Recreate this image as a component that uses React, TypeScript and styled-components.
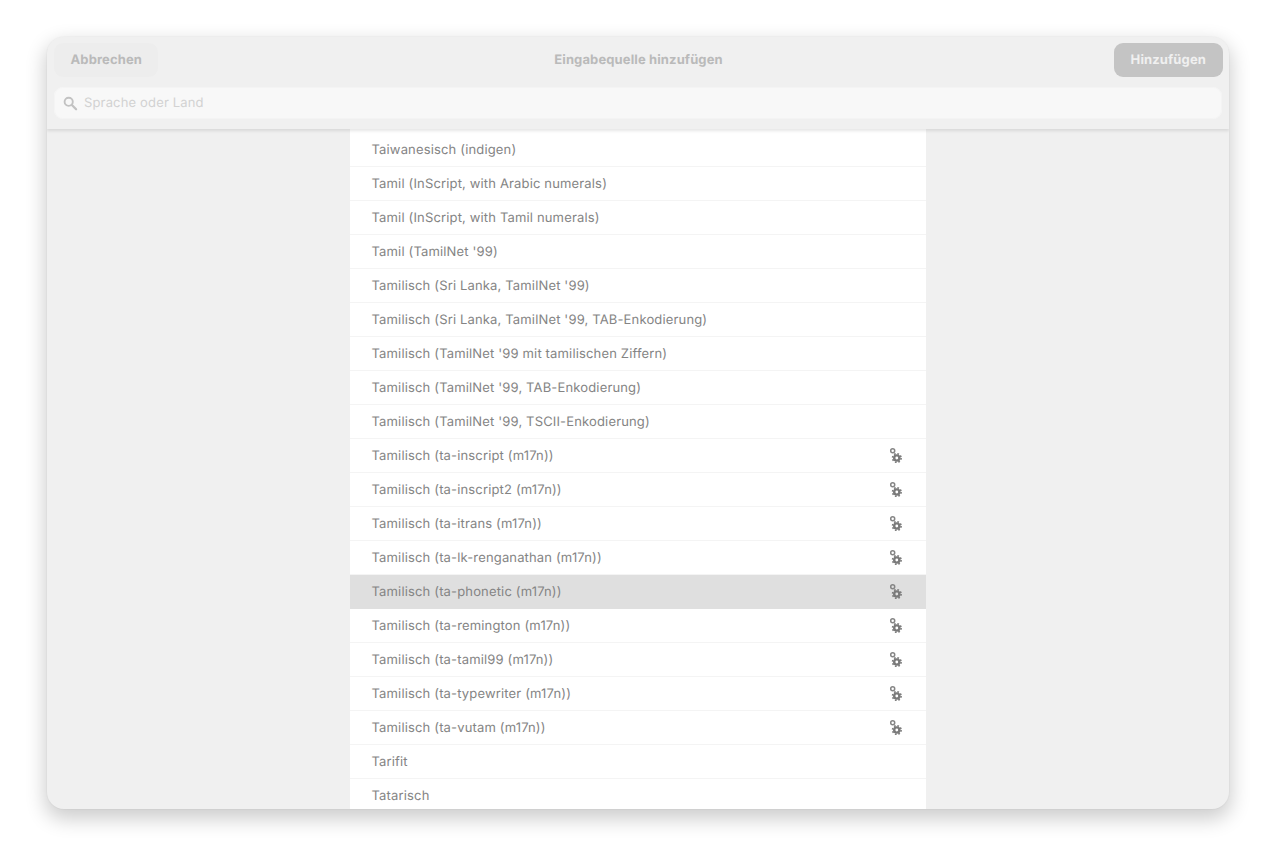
import styled, { createGlobalStyle } from "styled-components";

const GlobalStyle = createGlobalStyle`
  html, body {
    margin: 0;
    padding: 0;
    background: #fff;
  }
  body {
    font-family: "Inter", "Liberation Sans", sans-serif;
    font-size: 13px;
    letter-spacing: 0.155px;
    text-rendering: geometricPrecision;
    overflow: hidden;
  }
`;

const Page = styled.div`
  height: 866px;
  box-sizing: border-box;
  padding: 37px 47px 57px;
`;

const Window = styled.div`
  height: 772px;
  display: flex;
  flex-direction: column;
  background: #f0f0f0;
  border-radius: 17px;
  overflow: hidden;
  box-shadow: 0 0 0 1px rgba(0, 0, 0, 0.02), 0 8px 20px 2px rgba(0, 0, 0, 0.2);
`;

const Header = styled.header`
  flex: none;
  height: 92px;
  box-sizing: border-box;
  padding: 6px 6px 0 7px;
  background: #f0f0f0;
  box-shadow: 0 2px 3px rgba(0, 0, 0, 0.1);
  position: relative;
  z-index: 1;
`;

const TitleBar = styled.div`
  display: grid;
  grid-template-columns: 1fr auto 1fr;
  align-items: center;
  height: 34px;
`;

const Title = styled.div`
  font-weight: 700;
  letter-spacing: 0.12px;
  color: #bababa;
`;

const Button = styled.button<{ $primary?: boolean }>`
  height: 34px;
  padding: 0 ${(props) => (props.$primary ? "17px" : "16.5px")};
  justify-self: ${(props) => (props.$primary ? "end" : "start")};
  border: none;
  border-radius: 9px;
  font: 700 13px "Inter", "Liberation Sans", sans-serif;
  letter-spacing: 0.12px;
  text-rendering: geometricPrecision;
  background: ${(props) => (props.$primary ? "#c4c4c4" : "#ededed")};
  color: ${(props) => (props.$primary ? "#f0f0f0" : "#bababa")};
`;

const SearchBox = styled.div`
  display: flex;
  align-items: center;
  gap: 6px;
  height: 32px;
  box-sizing: border-box;
  margin: 10px 0 0;
  padding: 0 9px;
  width: 1168px;
  background: #f8f8f8;
  border-radius: 9px;
  box-shadow: inset 0 0 0 1px #f4f4f4;
  color: #d2d2d2;
  svg {
    flex: none;
  }
`;

const Body = styled.div`
  flex: 1;
  min-height: 0;
  display: flex;
  justify-content: center;
  overflow: hidden;
`;

const List = styled.ul`
  list-style: none;
  margin: 0 0 0 -1px;
  padding: 4px 0 0;
  width: 576px;
  background: #fff;
`;

const Row = styled.li<{ $selected?: boolean }>`
  height: 34px;
  box-sizing: border-box;
  display: flex;
  align-items: center;
  justify-content: space-between;
  padding: 0 22px;
  color: #848484;
  background: ${(props) => (props.$selected ? "#dfdfdf" : "#fff")};
  border-bottom: 1px solid ${(props) => (props.$selected ? "#dfdfdf" : "#f4f4f4")};
`;

const Gear = styled.svg`
  width: 16px;
  height: 16px;
  flex: none;
`;

function SearchIcon() {
  return (
    <svg width="15" height="15" viewBox="0 0 15 15" fill="none">
      <circle cx="5.7" cy="5.8" r="4.1" stroke="#c2c2c2" strokeWidth="1.9" />
      <path d="M8.9 9l4.2 4.2" stroke="#c2c2c2" strokeWidth="2.3" strokeLinecap="round" />
    </svg>
  );
}

function GearIcon() {
  return (
    <Gear viewBox="0 0 16 16" fill="none">
      <circle cx="4.7" cy="2.8" r="2" stroke="#858585" strokeWidth="1.5" />
      <circle cx="8.8" cy="10" r="2.6" stroke="#7a7a7a" strokeWidth="2.4" />
      <circle cx="8.8" cy="10" r="4.3" stroke="#7a7a7a" strokeWidth="1.6" strokeDasharray="1.69 1.69" />
    </Gear>
  );
}

const rows: { label: string; gear?: boolean; selected?: boolean }[] = [
  { label: "Taiwanesisch (indigen)" },
  { label: "Tamil (InScript, with Arabic numerals)" },
  { label: "Tamil (InScript, with Tamil numerals)" },
  { label: "Tamil (TamilNet '99)" },
  { label: "Tamilisch (Sri Lanka, TamilNet '99)" },
  { label: "Tamilisch (Sri Lanka, TamilNet '99, TAB-Enkodierung)" },
  { label: "Tamilisch (TamilNet '99 mit tamilischen Ziffern)" },
  { label: "Tamilisch (TamilNet '99, TAB-Enkodierung)" },
  { label: "Tamilisch (TamilNet '99, TSCII-Enkodierung)" },
  { label: "Tamilisch (ta-inscript (m17n))", gear: true },
  { label: "Tamilisch (ta-inscript2 (m17n))", gear: true },
  { label: "Tamilisch (ta-itrans (m17n))", gear: true },
  { label: "Tamilisch (ta-lk-renganathan (m17n))", gear: true },
  { label: "Tamilisch (ta-phonetic (m17n))", gear: true, selected: true },
  { label: "Tamilisch (ta-remington (m17n))", gear: true },
  { label: "Tamilisch (ta-tamil99 (m17n))", gear: true },
  { label: "Tamilisch (ta-typewriter (m17n))", gear: true },
  { label: "Tamilisch (ta-vutam (m17n))", gear: true },
  { label: "Tarifit" },
  { label: "Tatarisch" },
];

export default function App() {
  return (
    <Page>
      <GlobalStyle />
      <Window>
        <Header>
          <TitleBar>
            <Button>Abbrechen</Button>
            <Title>Eingabequelle hinzufügen</Title>
            <Button $primary>Hinzufügen</Button>
          </TitleBar>
          <SearchBox>
            <SearchIcon />
            Sprache oder Land
          </SearchBox>
        </Header>
        <Body>
          <List>
            {rows.map((row) => (
              <Row key={row.label} $selected={row.selected}>
                {row.label}
                {row.gear && <GearIcon />}
              </Row>
            ))}
          </List>
        </Body>
      </Window>
    </Page>
  );
}
